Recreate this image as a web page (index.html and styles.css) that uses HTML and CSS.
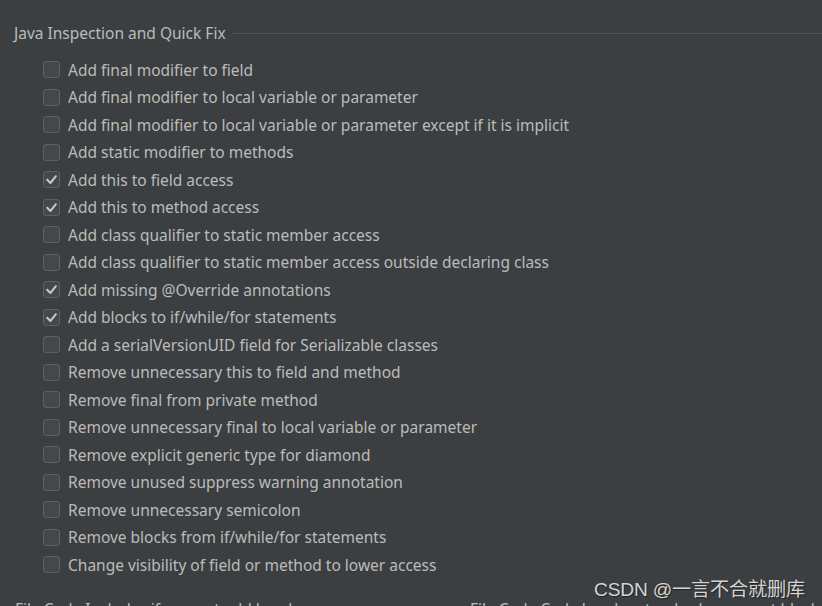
FILE: index.html
```html
<!DOCTYPE html>
<html>
<head>
<meta charset="utf-8">
<link rel="stylesheet" href="styles.css">
</head>
<body>
<div class="page">
  <div class="group-title">
    <span class="title-text">Java Inspection and Quick Fix</span>
    <span class="title-line"></span>
  </div>
  <div class="list">
    <div class="row"><span class="box"></span><span class="label">Add final modifier to field</span></div>
    <div class="row"><span class="box"></span><span class="label">Add final modifier to local variable or parameter</span></div>
    <div class="row"><span class="box"></span><span class="label">Add final modifier to local variable or parameter except if it is implicit</span></div>
    <div class="row"><span class="box"></span><span class="label">Add static modifier to methods</span></div>
    <div class="row"><span class="box"><svg viewBox="0 0 17 17" width="17" height="17"><path d="M4.2 8.8 L7.4 12 L12.9 5.2" /></svg></span><span class="label">Add this to field access</span></div>
    <div class="row"><span class="box"><svg viewBox="0 0 17 17" width="17" height="17"><path d="M4.2 8.8 L7.4 12 L12.9 5.2" /></svg></span><span class="label">Add this to method access</span></div>
    <div class="row"><span class="box"></span><span class="label">Add class qualifier to static member access</span></div>
    <div class="row"><span class="box"></span><span class="label">Add class qualifier to static member access outside declaring class</span></div>
    <div class="row"><span class="box"><svg viewBox="0 0 17 17" width="17" height="17"><path d="M4.2 8.8 L7.4 12 L12.9 5.2" /></svg></span><span class="label">Add missing @Override annotations</span></div>
    <div class="row"><span class="box"><svg viewBox="0 0 17 17" width="17" height="17"><path d="M4.2 8.8 L7.4 12 L12.9 5.2" /></svg></span><span class="label">Add blocks to if/while/for statements</span></div>
    <div class="row"><span class="box"></span><span class="label">Add a serialVersionUID field for Serializable classes</span></div>
    <div class="row"><span class="box"></span><span class="label">Remove unnecessary this to field and method</span></div>
    <div class="row"><span class="box"></span><span class="label">Remove final from private method</span></div>
    <div class="row"><span class="box"></span><span class="label">Remove unnecessary final to local variable or parameter</span></div>
    <div class="row"><span class="box"></span><span class="label">Remove explicit generic type for diamond</span></div>
    <div class="row"><span class="box"></span><span class="label">Remove unused suppress warning annotation</span></div>
    <div class="row"><span class="box"></span><span class="label">Remove unnecessary semicolon</span></div>
    <div class="row"><span class="box"></span><span class="label">Remove blocks from if/while/for statements</span></div>
    <div class="row"><span class="box"></span><span class="label">Change visibility of field or method to lower access</span></div>
  </div>
  <div class="cut-row">
    <span class="cut-left">File Code Includes if present add header</span>
    <span class="cut-right">File Code Code header standard comment block</span>
  </div>
  <div class="watermark">CSDN @一言不合就删库</div>
</div>
</body>
</html>
```

FILE: styles.css
```css
html, body {
  margin: 0;
  padding: 0;
  background: #3c3f41;
}
.page {
  position: relative;
  width: 822px;
  height: 606px;
  overflow: hidden;
  background: #3c3f41;
  color: #bbbbbb;
  font-family: "Noto Sans", "Open Sans", sans-serif;
  font-size: 15.5px;
}
.group-title {
  display: flex;
  align-items: center;
  gap: 6px;
  padding: 22px 0 0 14px;
  height: 22px;
}
.title-text {
  white-space: nowrap;
  line-height: 22px;
}
.title-line {
  flex: 1;
  height: 1px;
  background: #515658;
}
.list {
  display: flex;
  flex-direction: column;
  padding: 12px 0 0 43px;
}
.row {
  display: flex;
  align-items: center;
  gap: 8px;
  height: 27.5px;
}
.box {
  box-sizing: border-box;
  width: 17px;
  height: 17px;
  border: 1px solid #5d6163;
  border-radius: 3px;
  background: #43494a;
  display: flex;
  align-items: center;
  justify-content: center;
  flex: none;
}
.box svg {
  display: block;
  margin: -1px;
}
.box path {
  fill: none;
  stroke: #c8c8c8;
  stroke-width: 2;
  stroke-linecap: round;
  stroke-linejoin: round;
}
.label {
  white-space: nowrap;
  line-height: 20px;
}
.cut-row {
  display: flex;
  padding: 20px 0 0 15px;
  white-space: nowrap;
  line-height: 20px;
}
.cut-left {
  width: 455px;
}
.watermark {
  position: absolute;
  left: 594px;
  top: 574px;
  font-family: "Liberation Sans", "Noto Sans CJK SC", sans-serif;
  font-size: 19.2px;
  color: #d4d4d4;
  text-shadow: 1px 1px 1px #222;
  letter-spacing: -0.2px;
}
```
